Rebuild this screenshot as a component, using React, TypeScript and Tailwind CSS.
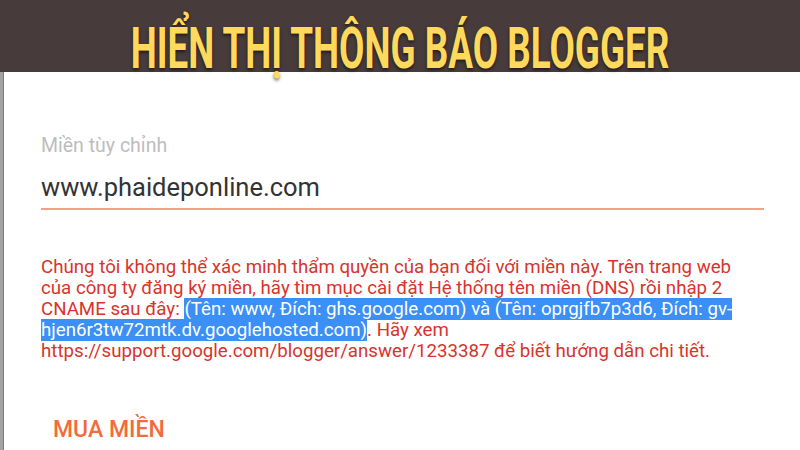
import React from "react";

const App: React.FC = () => {
  return (
    <div className="w-[800px] h-[450px] overflow-hidden bg-white font-['Roboto',sans-serif]">
      {/* Banner */}
      <header className="relative z-10 h-[72px] bg-[#473b3b] flex justify-center">
        <h1 className="pt-[20px] leading-[56px] text-[58px] font-bold text-[#ffd95c] whitespace-nowrap scale-x-[0.635] [text-shadow:0_2px_4px_rgba(0,0,0,0.55)] font-['Roboto',sans-serif]">
          HIỂN THỊ THÔNG BÁO BLOGGER
        </h1>
      </header>

      {/* Dialog body */}
      <main className="h-[378px] border-l-[3px] border-[#a3a3a3] flex">
        <div className="w-px bg-[#7a7a7a]" />
        <div className="flex-1 pl-[37px] pr-[36px]">
          <div className="pt-[63px]">
            <p className="text-[19.5px] leading-[22px] text-[#bdbdbd]">Miền tùy chỉnh</p>
            <div className="mt-[15px] border-b-2 border-[#f4a088] pb-[6px]">
              <p className="text-[25.5px] leading-[30px] text-[#333333]">www.phaideponline.com</p>
            </div>
          </div>

          <p className="mt-[47px] text-[18.7px] leading-[21px] text-[#d9342c] whitespace-nowrap">
            Chúng tôi không thể xác minh thẩm quyền của bạn đối với miền này. Trên trang web
            <br />
            của công ty đăng ký miền, hãy tìm mục cài đặt Hệ thống tên miền (DNS) rồi nhập 2
            <br />
            CNAME sau đây:{" "}
            <span className="bg-[#3b8ff5] text-white">
              (Tên: www, Đích: ghs.google.com) và (Tên: oprgjfb7p3d6, Đích: gv-
              <br />
              hjen6r3tw72mtk.dv.googlehosted.com)
            </span>
            . Hãy xem
            <br />
            https://support.google.com/blogger/answer/1233387 để biết hướng dẫn chi tiết.
          </p>

          <button className="mt-[55px] ml-[12px] text-[23px] leading-[26px] font-medium text-[#f26b3a]">
            MUA MIỀN
          </button>
        </div>
      </main>
    </div>
  );
};

export default App;
